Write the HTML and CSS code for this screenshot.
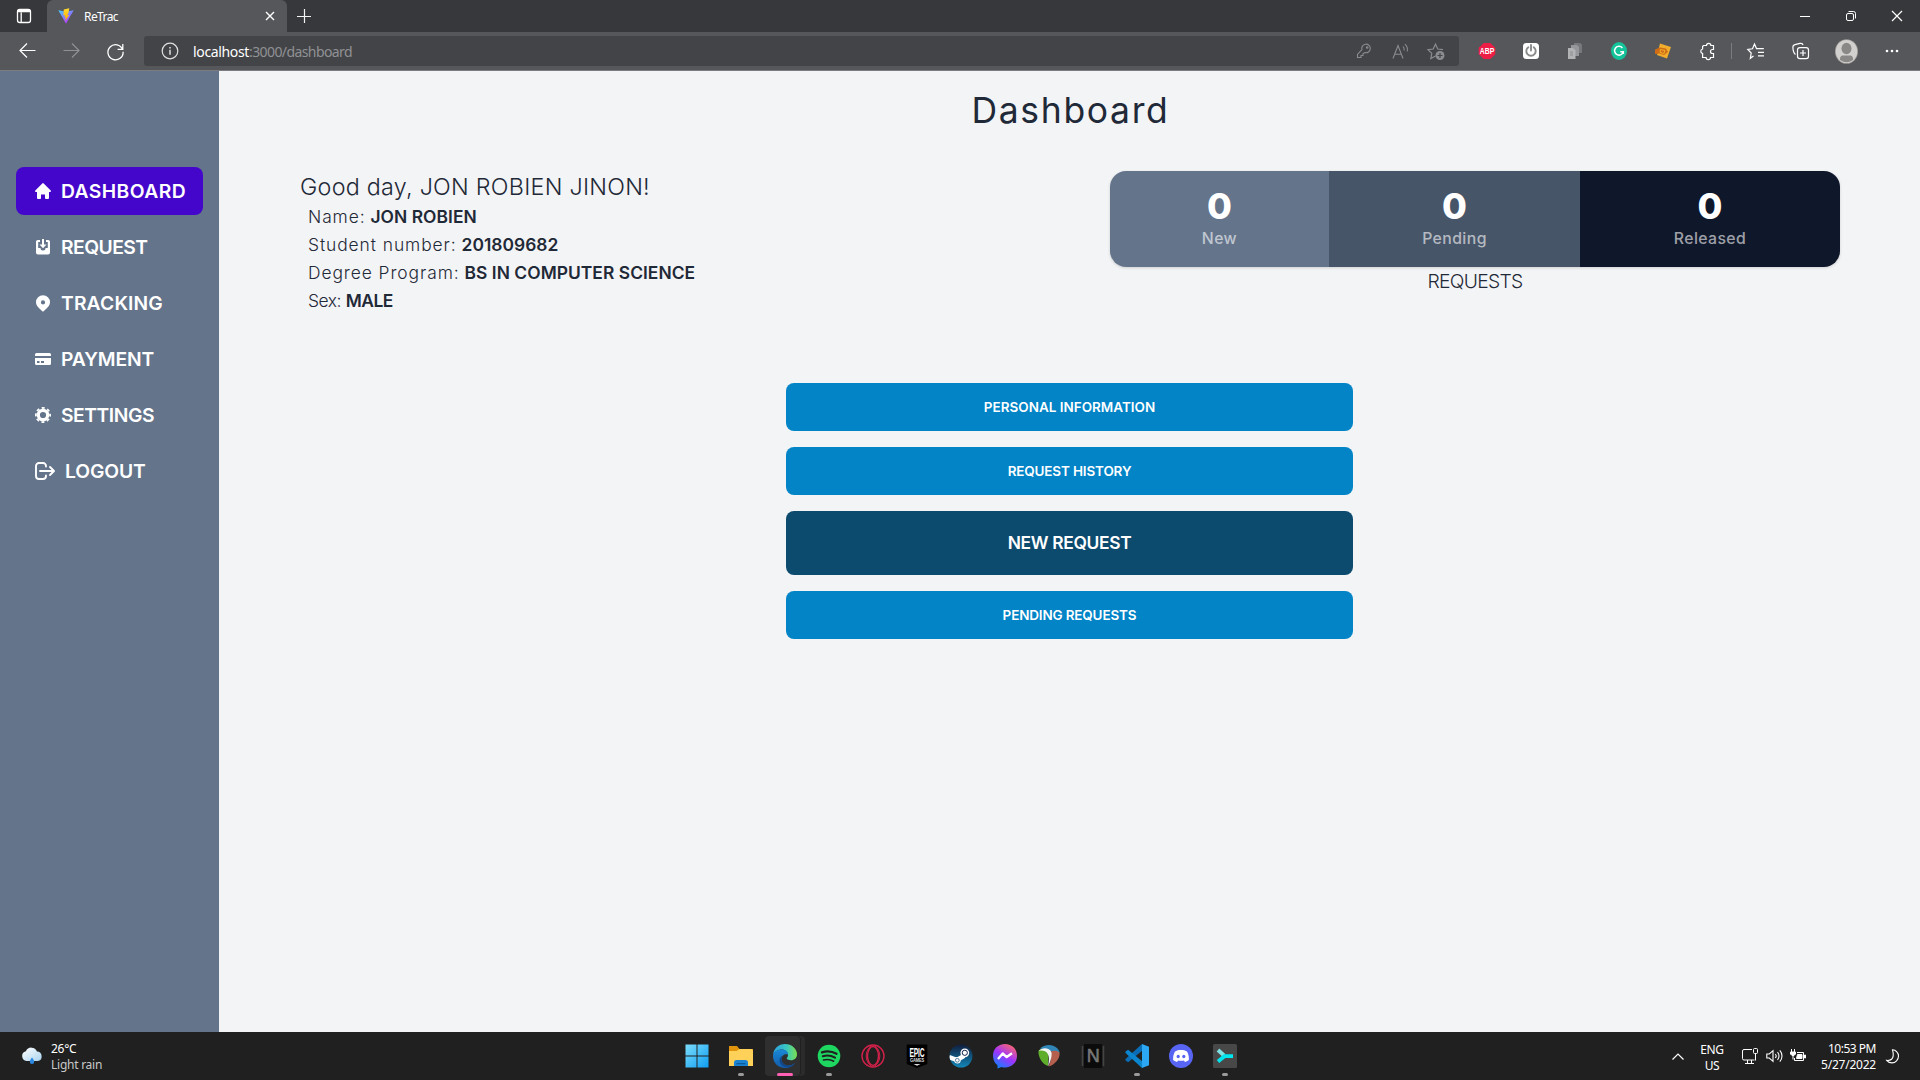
FILE: index.html
```html
<!DOCTYPE html>
<html lang="en">
<head>
<meta charset="utf-8">
<title>ReTrac</title>
<link rel="stylesheet" href="styles.css">
</head>
<body>
<div class="screen">
  <header class="titlebar">
    <div class="tab-actions">
      <svg width="16" height="16" viewBox="0 0 16 16" fill="none" stroke="#fff" stroke-width="1.3"><rect x="1.5" y="1.5" width="13" height="13" rx="2.2"/><path d="M1.500 3.500h13M2 2.500h12M5.200 4.500v10"/></svg>
    </div>
    <div class="tab">
      <svg width="16" height="16" viewBox="0 0 16 16"><defs><linearGradient id="va" x1="0" y1="0" x2=".6" y2="1"><stop offset="0" stop-color="#41d1ff"/><stop offset="1" stop-color="#bd34fe"/></linearGradient><linearGradient id="vb" x1="0" y1="0" x2="0" y2="1"><stop offset="0" stop-color="#ffdc30"/><stop offset="1" stop-color="#ffa800"/></linearGradient></defs><path d="M.3 2.300 8 15.700 15.700 2.300 8 3.700z" fill="url(#va)"/><path d="M11.300.3 5.800 1.400 5.400 7.600l1.700-.3-.5 2.400 1.300-.3L7.300 13l4-6.300-2 .4 1.300-2.700z" fill="url(#vb)"/></svg>
      <span class="tab-title">ReTrac</span>
      <svg class="tab-close" width="10" height="10" viewBox="0 0 10 10" stroke="#fff" stroke-width="1.400"><path d="M1 1l8 8M9 1l-8 8"/></svg>
    </div>
    <svg class="new-tab" width="14" height="14" viewBox="0 0 14 14" stroke="#f4f4f4" stroke-width="1.200"><path d="M7.500 0v14M0 7.500h14"/></svg>
    <div class="window-controls">
      <span><svg width="10" height="10" viewBox="0 0 10 10" stroke="#fff"><path d="M0 5.500h10"/></svg></span>
      <span><svg width="10" height="10" viewBox="0 0 10 10" fill="none" stroke="#fff"><rect x=".5" y="2.500" width="7" height="7" rx="1.500"/><path d="M2.500.5h5a2 2 0 0 1 2 2v5"/></svg></span>
      <span><svg width="10" height="10" viewBox="0 0 10 10" stroke="#fff" stroke-width="1.200"><path d="M0 0l10 10M10 0L0 10"/></svg></span>
    </div>
  </header>

  <div class="toolbar">
    <div class="nav-buttons">
      <span><svg width="17" height="16" viewBox="0 0 17 16" fill="none" stroke="#fff" stroke-width="1.200"><path d="M16.500 7.500H1M8 .5l-7 7 7 7"/></svg></span>
      <span><svg width="17" height="16" viewBox="0 0 17 16" fill="none" stroke="#909194" stroke-width="1.200"><path d="M.5 7.500H16M9 .5l7 7-7 7"/></svg></span>
      <span><svg width="17" height="17" viewBox="0 0 17 17" fill="none" stroke="#fff" stroke-width="1.300"><path d="M15.600 6.500A7.600 7.600 0 1 0 16.100 8.700M15.800 1v5.300h-5.200"/></svg></span>
    </div>
    <div class="address">
      <svg width="18" height="18" viewBox="0 0 18 18" fill="none" stroke="#e0e0e0" stroke-width="1.200"><circle cx="9" cy="9" r="7.800"/><path d="M9 7.800v5M9 5v1.500" stroke-width="1.500"/></svg>
      <div class="url"><span class="host">localhost</span><span class="path">:3000/dashboard</span></div>
      <div class="address-icons">
        <span><svg width="16" height="16" viewBox="0 0 16 16" fill="none" stroke="#8b8c8f" stroke-width="1.100"><path d="M8.900 9.600a4.300 4.300 0 1 0-3-2.900L1.500 11.500v3H5v-2h2v-1.700z"/><circle cx="11.200" cy="4.500" r=".8"/></svg></span>
        <span><svg width="17" height="17" viewBox="0 0 17 17" fill="none" stroke="#8b8c8f" stroke-width="1.100"><path d="M1 15.500 6 2.500l5 13M2.700 11.200h6.600M11 3.500a5 5 0 0 1 1.200 4M13 1.200a8 8 0 0 1 2.300 7.300"/></svg></span>
        <span><svg width="18" height="17" viewBox="0 0 18 17" fill="none" stroke="#8b8c8f" stroke-width="1.200"><path d="M8.500 13 3.800 15.600l1-5.200L1 6.700l5.200-.7L8.500 1.200 10.800 6l5.200.7"/><circle cx="13" cy="12.500" r="4.500" fill="#8b8c8f" stroke="none"/><path d="M13 10v5M10.500 12.500h5" stroke="#434447"/></svg></span>
      </div>
    </div>
    <div class="extensions">
      <span><svg width="18" height="18" viewBox="-1 0 18 18"><path d="M4.700 1h6.600L16.300 5.700v6.600L11.300 17H4.700L-.3 12.300V5.700z" fill="#ed1e45"/><text x="8" y="12.200" text-anchor="middle" font-family="Liberation Sans" font-weight="700" font-size="9" fill="#fff" textLength="14.500" lengthAdjust="spacingAndGlyphs">ABP</text></svg></span>
      <span><svg width="16" height="18" viewBox="0 0 16 18" fill="none"><rect y="1" width="16" height="16" rx="3.500" fill="#fff"/><path d="M5.300 5.200a4.700 4.700 0 1 0 5.400 0M8 3v5.500" stroke="#8a8b8d" stroke-width="1.900" stroke-linecap="round"/></svg></span>
      <span><svg width="16" height="16" viewBox="0 0 16 16"><path d="M7 0h6l2 1.500V10H7z" fill="#77787b"/><path d="M4 2h6l2 2v9H4z" fill="#96979a"/><path d="M1 5h5l2.500 2.500V16H1z" fill="#b2b3b5"/><path d="M3 8h3v5H3z" fill="#9fa0a2"/></svg></span>
      <span><svg width="16" height="18" viewBox="0 0 16 18"><ellipse cx="8" cy="9" rx="8" ry="9" fill="#15c39a"/><path d="M11.400 5.900A4.400 4.400 0 1 0 12.300 9.700H9.300M12.300 9.700v2.300" fill="none" stroke="#fff" stroke-width="1.500"/></svg></span>
      <span><svg width="16" height="16" viewBox="0 0 16 16"><path d="M5 .5l11 3.500-4 11.500L2 12z" fill="#f0ae2c"/><path d="M0 6.500l5-2 6 1 2 3.500-4 3-5-1.500-4 .5z" fill="#d06d14"/><path d="M5.500 6.500l4.500 1-1 3-4-1z" fill="none" stroke="#f0ae2c"/></svg></span>
      <span><svg width="17" height="18" viewBox="0 0 17 18" fill="none" stroke="#fff" stroke-width="1.200"><path d="M4.500 3.500h3a2.200 2.200 0 0 1 4.400 0h2.600v4h-1a2 2 0 0 0 0 4h1v4h-3a2.200 2.200 0 0 1-4.400 0H3.600v-4a2.300 2.300 0 0 1 0-4.500v-2.500z"/></svg></span>
      <i class="divider"></i>
      <span><svg width="18" height="18" viewBox="0 0 18 18" fill="none" stroke="#fff" stroke-width="1.200"><path d="M6.500 14 3.300 16.300 4.200 11 .8 7.500l4.700-.7L7.500 2l2 4.600h7.300M11 10.300h6M11 13.900h6"/></svg></span>
      <span><svg width="17" height="18" viewBox="0 0 17 18" fill="none" stroke="#fff" stroke-width="1.200"><path d="M3.500 12.500C1.500 11 1 8.500.9 5.500.8 4 1.500 3 3 2.600l5-1.200c1.500-.3 2.700.3 3 1.600"/><rect x="5.500" y="5.600" width="11" height="11" rx="2.400"/><path d="M11 8v6M8 11h6"/></svg></span>
      <span class="profile"><svg width="23" height="25" viewBox="0 0 23 25"><clipPath id="av"><circle cx="11.500" cy="12.500" r="10.700"/></clipPath><ellipse cx="11.500" cy="12.500" rx="11.500" ry="12.300" fill="#a29f9b"/><ellipse cx="11.500" cy="12.500" rx="10.700" ry="11.500" fill="#d2d0ce"/><ellipse cx="11.500" cy="9.500" rx="5" ry="5.700" fill="#8a8886"/><path clip-path="url(#av)" d="M5 25v-5.500c0-2.500 2-3 4-3h5c2 0 4 .5 4 3V25z" fill="#8a8886"/></svg></span>
      <span><svg width="14" height="4" viewBox="0 0 14 4" fill="#fff"><circle cx="2" cy="2" r="1.300"/><circle cx="7" cy="2" r="1.300"/><circle cx="12" cy="2" r="1.300"/></svg></span>
    </div>
  </div>

  <div class="app">
    <nav class="sidebar">
      <a class="nav-item active"><svg width="16" height="16" viewBox="0 0 16 16" fill="#fff"><path d="M7.300.4a1 1 0 0 1 1.400 0L15.700 7.400c.6.600.2 1.500-.6 1.500H14v6a1 1 0 0 1-1 1h-2.200a.8.8 0 0 1-.8-.8V11.500H6v3.700a.8.8 0 0 1-.8.8H3a1 1 0 0 1-1-1V8.900H.9C.1 8.900-.3 8 .3 7.400z"/></svg><span class="nav-dashboard">DASHBOARD</span></a>
      <a class="nav-item"><svg width="16" height="16" viewBox="0 0 16 16" fill="#fff"><path d="M1 2.500A1.700 1.700 0 0 1 2.700.9H5v2H3.200v6h2.300a2.500 2.500 0 0 0 5 0h2.300v-6H11v-2h2.300A1.700 1.700 0 0 1 15 2.500v11a1.900 1.900 0 0 1-1.900 1.900H2.900A1.900 1.900 0 0 1 1 13.500z"/><path d="M7 0h2v5.500h2.500L8 9.200 4.500 5.500H7z"/></svg><span class="nav-request">REQUEST</span></a>
      <a class="nav-item"><svg width="16" height="17" viewBox="0 0 16 17" fill="#fff"><path fill-rule="evenodd" d="M8 .3a7 7 0 0 1 7 7c0 3.700-3.800 6.700-7 9.500-3.200-2.800-7-5.800-7-9.500a7 7 0 0 1 7-7zm0 5a2.100 2.100 0 1 0 0 4.200 2.100 2.100 0 0 0 0-4.200z"/></svg><span class="nav-tracking">TRACKING</span></a>
      <a class="nav-item"><svg width="16" height="16" viewBox="0 0 16 16" fill="#fff"><path d="M0 5V3.500A1.500 1.500 0 0 1 1.500 2h13A1.500 1.500 0 0 1 16 3.500V5z"/><path fill-rule="evenodd" d="M0 7h16v5.500a1.500 1.500 0 0 1-1.500 1.500h-13A1.500 1.500 0 0 1 0 12.500zm2 3v2h2.500v-2zm4 0v2h3v-2z"/></svg><span class="nav-payment">PAYMENT</span></a>
      <a class="nav-item"><svg width="16" height="16" viewBox="0 0 16 16"><g fill="none" stroke="#fff"><circle cx="8" cy="8" r="4.700" stroke-width="3.200"/><circle cx="8" cy="8" r="7.100" stroke-width="1.800" stroke-dasharray="3 2.576" stroke-dashoffset="1.500"/></g></svg><span class="nav-settings">SETTINGS</span></a>
      <a class="nav-item"><svg width="20" height="18" viewBox="0 0 20 18" fill="none" stroke="#fff" stroke-width="1.900" stroke-linecap="round" stroke-linejoin="round"><path d="M11 4.500V4a3 3 0 0 0-3-3H4a3 3 0 0 0-3 3v10a3 3 0 0 0 3 3h4a3 3 0 0 0 3-3v-.5M5 9h13.500M15 5l4 4-4 4"/></svg><span class="nav-logout">LOGOUT</span></a>
    </nav>

    <main class="content">
      <h1 class="title">Dashboard</h1>
      <section class="overview">
        <div class="student">
          <p class="greeting">Good day, JON ROBIEN JINON!</p>
          <ul class="details">
            <li><span class="wide">Name:</span> <b>JON ROBIEN</b></li>
            <li><span class="wide">Student number:</span> <b>201809682</b></li>
            <li><span class="wide">Degree Program:</span> <b>BS IN COMPUTER SCIENCE</b></li>
            <li><span class="sex">Sex:</span> <b class="sex">MALE</b></li>
          </ul>
        </div>
        <div class="requests">
          <div class="stats">
            <div class="stat stat-new"><b>0</b><span>New</span></div>
            <div class="stat stat-pending"><b>0</b><span>Pending</span></div>
            <div class="stat stat-released"><b>0</b><span>Released</span></div>
          </div>
          <p class="caption">REQUESTS</p>
        </div>
      </section>
      <section class="actions">
        <a class="button personal">PERSONAL INFORMATION</a>
        <a class="button">REQUEST HISTORY</a>
        <a class="button primary">NEW REQUEST</a>
        <a class="button">PENDING REQUESTS</a>
      </section>
    </main>
  </div>

  <footer class="taskbar">
    <div class="weather">
      <svg width="22" height="18" viewBox="0 0 22 18"><defs><linearGradient id="cl" x1="0" y1="0" x2="1" y2="1"><stop offset="0" stop-color="#fff"/><stop offset="1" stop-color="#a9d2ee"/></linearGradient></defs><path d="M5.500 14a5 5 0 0 1-.6-9.800A6 6 0 0 1 16 4.500a4.800 4.800 0 0 1 .8 9.500z" fill="url(#cl)"/><path d="M11 10.500c1.500 2 2.200 3 2.200 4.200a2.200 2.200 0 0 1-4.400 0c0-1.200.7-2.200 2.200-4.200z" fill="#2b88e0"/></svg>
      <div class="forecast"><p>26°C</p><p class="cond">Light rain</p></div>
    </div>
    <div class="apps">
      <span><svg width="24" height="24" viewBox="0 0 24 24"><defs><linearGradient id="wn" x1="0" y1="0" x2="1" y2="1"><stop offset="0" stop-color="#7bddfb"/><stop offset="1" stop-color="#0f9df2"/></linearGradient></defs><path d="M.5.500h11v11H.5zM12.500.5h11v11h-11zM.5 12.500h11v11H.5zM12.500 12.500h11v11h-11z" fill="url(#wn)"/></svg></span>
      <span class="running"><svg width="24" height="24" viewBox="0 0 24 24"><path d="M0 2h8l2.500 3H24v4H0z" fill="#e0930c"/><path d="M0 7h7.500l3-2H22a2 2 0 0 1 2 2v15H0z" fill="#ffd158"/><path d="M5 22v-3.500A2.500 2.500 0 0 1 7.500 16h9a2.500 2.500 0 0 1 2.500 2.500V22z" fill="#1b83d2"/><path d="M7.500 19h9v1.300h-9z" fill="#0c5a9c"/></svg></span>
      <span class="running current"><svg width="24" height="24" viewBox="0 0 24 24"><defs><linearGradient id="e1" x1="0" y1=".3" x2="1" y2=".3"><stop offset="0" stop-color="#2c9fe0"/><stop offset=".55" stop-color="#38c7c4"/><stop offset="1" stop-color="#79e04f"/></linearGradient><linearGradient id="e2" x1="0" y1="0" x2="0" y2="1"><stop offset="0" stop-color="#1989d8"/><stop offset="1" stop-color="#135ba8"/></linearGradient></defs><path d="M0 11C.6 4.500 5.500 0 12 0c7 0 12 5 12 10.200 0 3.800-2.600 6-6 6-2.800 0-4.300-1-4.300-1.700 0-.8 1.300-1.200 1.300-3.500C15 8 12.500 5.500 8.800 5.500 5 5.500 1.500 7.500 0 11z" fill="url(#e1)"/><path d="M0 11.500C.5 8 4.500 5.500 8.500 5.500c4 0 6.500 2.300 6.500 5 0 0-3.500-1.200-5.500 1.500-2.800 4 .5 9.500 5.500 9.500 2.500 0 5-.8 7-2.500C20 22 16.500 24 12 24 5 24-.3 18.500 0 11.500z" fill="url(#e2)"/><path d="M9.500 12c-2.800 4 .5 9.500 5.500 9.500 2.500 0 5-.8 7-2.500-.8 1.200-2 2.400-3.300 3.200C11 26 4.800 19 7 14.500 7.500 13.200 8.500 12.300 9.500 12z" fill="#12468a"/></svg></span>
      <span class="running"><svg width="24" height="24" viewBox="0 0 24 24" fill="none" stroke="#202020" stroke-linecap="round"><circle cx="12" cy="12" r="11.300" fill="#1ed760" stroke="none"/><path d="M5 8.300c5-1.500 10.500-.8 14.500 1.500" stroke-width="2.300"/><path d="M5.800 12.300c4.300-1.300 8.800-.6 12.200 1.400" stroke-width="2"/><path d="M6.500 16c3.600-1 7.200-.6 10.200 1.200" stroke-width="1.600"/></svg></span>
      <span><svg width="24" height="24" viewBox="0 0 24 24" fill="none" stroke="#d3214a" stroke-width="1.400"><circle cx="12" cy="12" r="11"/><ellipse cx="12" cy="12" rx="5.500" ry="9.500"/><path d="M10.500 1.500a13 13 0 0 0 0 21M13.500 1.500a13 13 0 0 1 0 21" stroke-width="1"/></svg></span>
      <span><svg width="24" height="24" viewBox="-1 0 24 24"><path d="M.7.500h20.600V20L11 24 .7 20z" fill="#000"/><text x="11" y="12.500" text-anchor="middle" font-family="Liberation Sans" font-weight="700" font-size="12.500" fill="#fff" textLength="15" lengthAdjust="spacingAndGlyphs">EPIC</text><text x="11" y="17.600" text-anchor="middle" font-family="Liberation Sans" font-weight="700" font-size="4.500" fill="#ddd" textLength="14" lengthAdjust="spacingAndGlyphs">GAMES</text><path d="M7.500 20h7L11 21.700z" fill="#ddd"/></svg></span>
      <span><svg width="24" height="24" viewBox="0 0 24 24"><defs><linearGradient id="st" x1="0" y1="0" x2="0" y2="1"><stop offset="0" stop-color="#111d3c"/><stop offset="1" stop-color="#1387b8"/></linearGradient><clipPath id="sc"><circle cx="12" cy="12" r="11.500"/></clipPath></defs><circle cx="12" cy="12" r="11.500" fill="url(#st)"/><path clip-path="url(#sc)" d="M0 13l8 3 6-3.500L15 9" fill="none" stroke="#fff" stroke-width="4.500"/><circle cx="15.800" cy="8.800" r="4.400" fill="#fff"/><circle cx="15.800" cy="8.800" r="2.600" fill="#fff" stroke="#15264b"/><circle cx="8.500" cy="16.300" r="3.200" fill="#fff"/><circle cx="8.300" cy="16.300" r="1.900" fill="none" stroke="#144a76" stroke-width=".7"/></svg></span>
      <span><svg width="24" height="24" viewBox="0 0 24 24"><defs><linearGradient id="ms" x1=".2" y1="1" x2=".8" y2="0"><stop offset="0" stop-color="#0a85ff"/><stop offset=".5" stop-color="#a033ff"/><stop offset="1" stop-color="#ff6a68"/></linearGradient></defs><path d="M12 0c7 0 12 5 12 11.700s-5 11.700-12 11.700c-1.300 0-2.400-.1-3.500-.5L4.500 24.500v-3.300C1.700 19 0 15.700 0 11.700 0 5 5 0 12 0z" fill="url(#ms)"/><path d="M5 15l4.700-5.500 4 3.600L19 9.300" fill="none" stroke="#fff" stroke-width="2.400" stroke-linejoin="round"/></svg></span>
      <span><svg width="24" height="24" viewBox="0 0 24 24"><path d="M3 4.500C7 .5 15-.5 20 4c1.500 1.500 2.500 3 2.500 5L13 7z" fill="#2f86b7"/><path d="M1.500 7C3 4 9 4.500 11.500 7.500L11 22C5 20 1 13 1.500 7z" fill="#5fae2b"/><path d="M13.500 7.500c3-1.500 7-1 9 1C23.500 14 18 21 11.500 22.500c2.500-5 3.500-10 2-15z" fill="#b5604f"/><path d="M1.800 7C5 3 12.500 3.500 14.300 8c1.200 4-1 10-3.300 14.500 1-5 1.500-10-.5-13S5 6 1.800 7z" fill="#f4f4f4"/></svg></span>
      <span><svg width="24" height="24" viewBox="0 0 24 24"><path d="M3 0h18v24H3z" fill="#0b0b0b"/><path d="M1.500 2v20M22.500 2v20" stroke="#444" stroke-width="1.500"/><text x="12" y="18" text-anchor="middle" font-family="Liberation Sans" font-size="18" fill="#777" stroke="#777" stroke-width=".6">N</text></svg></span>
      <span class="running"><svg width="24" height="24" viewBox="0 0 24 24"><path d="M17 0 18 6 3.200 18.200.5 16.500V15z" fill="#0a6db5"/><path d="M17 24l1-6L3.200 5.800.5 7.500V9z" fill="#0c85cf"/><path d="M17 0l7 2.800v18.400L17 24z" fill="#2ba7f3"/></svg></span>
      <span><svg width="24" height="24" viewBox="0 0 24 24"><circle cx="12" cy="12" r="12" fill="#5865f2"/><path d="M8.700 6.300c2-.4 4.600-.4 6.600 0L18 7.500c1.500 2.500 2 5 1.900 8.500-1.300 1-2.600 1.600-4 1.900l-.9-1.500c-2 .4-4 .4-6 0l-.9 1.500c-1.400-.3-2.700-.9-4-1.900C4 12.500 4.500 10 6 7.500z" fill="#fff"/><ellipse cx="9.200" cy="12.500" rx="1.600" ry="1.800" fill="#5865f2"/><ellipse cx="14.800" cy="12.500" rx="1.600" ry="1.800" fill="#5865f2"/></svg></span>
      <span class="running"><svg width="24" height="24" viewBox="0 0 24 24"><rect width="24" height="24" rx="1.500" fill="#484848"/><path d="M5 6l6 5.500" fill="none" stroke="#7fe0e2" stroke-width="3.800"/><path d="M5 17.500l6.500-5.300H20" fill="none" stroke="#00e5ee" stroke-width="3.800"/></svg></span>
    </div>
    <div class="tray">
      <span class="chevron"><svg width="12" height="7" viewBox="0 0 12 7" fill="none" stroke="#fff" stroke-width="1.200"><path d="M.5 6.500 6 1l5.500 5.500"/></svg></span>
      <div class="lang"><p>ENG</p><p>US</p></div>
      <div class="status">
        <span><svg width="16" height="16" viewBox="0 0 16 16" fill="none" stroke="#fff"><path d="M10 1.500H2a1.500 1.500 0 0 0-1.500 1.500v7.500A1.500 1.500 0 0 0 2 12h10.500M3 15.500h9M5.500 12v3M9.500 12v3M13.500 6v6.500"/><rect x="11.500" y=".5" width="4" height="5" rx="1"/></svg></span>
        <span><svg width="17" height="14" viewBox="0 0 17 14" fill="none" stroke="#fff" stroke-width="1.100"><path d="M.8 5v4h2.500L7 12.300V1.700L3.300 5zM9.300 5a3 3 0 0 1 0 4M11.500 3.200a5.500 5.500 0 0 1 0 7.600M13.800 1.300a8.500 8.500 0 0 1 0 11.400"/></svg></span>
        <span><svg width="16" height="14" viewBox="0 0 16 14" fill="none" stroke="#fff"><path d="M7 3.500h6.500v8h-9V9M14.500 6v3h1V6z"/><path d="M7.500 5.500h4.500v4H6.500z" fill="#fff"/><path d="M1.500 0v3M4.500 0v3M3 6v4.500"/><path d="M.5 3h5v2L4 6.500H2L.5 5z" fill="#fff"/></svg></span>
      </div>
      <div class="clock"><p class="time">10:53 PM</p><p class="date">5/27/2022</p></div>
      <svg class="moon" width="14" height="15" viewBox="0 0 14 15" fill="none" stroke="#fff" stroke-width="1.100"><path d="M6.500.8c3.500.2 6 3 6 6.200 0 3.700-3 6.700-6.500 6.900-2.300 0-4.200-1-5.300-2.500 3 .3 6-1 6.500-4.500.3-2.200-.2-4.500-.7-6.100z"/></svg>
    </div>
  </footer>
</div>
</body>
</html>
```
FILE: styles.css
```css
* { box-sizing: border-box; margin: 0; padding: 0; }
body { width: 1920px; height: 1080px; overflow: hidden; font-family: Inter, "Open Sans", sans-serif; color: #1f2937; white-space: nowrap; }
svg { display: block; flex: none; overflow: visible; }
.screen { display: flex; flex-direction: column; width: 1920px; height: 1080px; }

/* Browser window */
.titlebar { display: flex; align-items: center; height: 32px; background: #37383b; font-family: "Noto Sans", sans-serif; }
.tab-actions { display: flex; justify-content: center; width: 47px; }
.tab { display: flex; align-items: center; width: 240px; height: 32px; padding: 0 12px 0 11px; background: #56575b; border-radius: 6px 6px 0 0; }
.tab-title { margin-left: 10px; font-size: 12px; letter-spacing: -.58px; color: #fff; }
.tab-close { margin-left: auto; }
.new-tab { margin-left: 10px; }
.window-controls { display: flex; margin-left: auto; }
.window-controls span { display: flex; align-items: center; justify-content: center; width: 46px; height: 32px; }
.toolbar { display: flex; align-items: center; height: 39px; padding-right: 6px; background: #56575b; border-bottom: 1px solid #7b7b80; }
.nav-buttons { display: flex; width: 144px; padding-left: 5px; }
.nav-buttons span { display: flex; justify-content: center; align-items: center; width: 44px; }
.address { display: flex; align-items: center; width: 1315px; height: 30px; padding: 0 5px 0 17px; border-radius: 3px; background: #434447; }
.url { margin-left: 14px; font: 14px "Noto Sans", sans-serif; color: #909194; }
.host { color: #fff; letter-spacing: -.35px; }
.path { letter-spacing: -.59px; }
.address-icons { display: flex; margin-left: auto; }
.address-icons span { display: flex; justify-content: center; align-items: center; width: 36px; }
.extensions { display: flex; align-items: center; margin-left: auto; }
.extensions span { display: flex; justify-content: center; align-items: center; width: 44px; }
.extensions .profile { width: 48px; }
.divider { width: 1px; height: 16px; margin: 0 2px; background: #7b7c80; }

/* Application */
.app { display: flex; height: 961px; background: #f3f4f6; }
.sidebar { display: flex; flex-direction: column; gap: 8px; width: 219px; padding: 96px 16px 0; background: #64748b; }
.nav-item { display: flex; align-items: center; gap: 10px; height: 48px; padding-left: 19px; border-radius: 8px; color: #fff; font-size: 19.3px; font-weight: 600; }
.nav-item.active { background: #4506cb; }
.nav-dashboard { letter-spacing: .42px; }
.nav-request { letter-spacing: -.54px; }
.nav-tracking { letter-spacing: .15px; }
.nav-payment, .nav-logout { letter-spacing: -.14px; }
.nav-settings { letter-spacing: -.45px; }
.content { flex: 1; }
.title { height: 80px; padding-left: 2px; text-align: center; font-size: 35.500px; line-height: 80px; font-weight: 400; letter-spacing: 1.65px; }
.overview { display: flex; justify-content: space-between; padding: 20px 80px 0 81px; height: 232px; }
.greeting { font-size: 23.3px; font-weight: 300; line-height: 32px; letter-spacing: .26px; }
.details { padding-left: 8px; list-style: none; font-size: 17.4px; font-weight: 300; line-height: 28px; }
.details b { font-weight: 600; letter-spacing: .05px; }
.details .wide { letter-spacing: .93px; }
.details .sex { letter-spacing: -.5px; }
.requests { width: 730px; }
.stats { display: grid; grid-template-columns: 219px 251px 260px; height: 96px; overflow: hidden; border-radius: 16px; color: #fff; box-shadow: 0 1px 3px rgba(0, 0, 0, .15); }
.stat { display: flex; flex-direction: column; align-items: center; padding-top: 15px; }
.stat b { font-size: 36px; line-height: 40px; font-weight: 800; }
.stat span { font-size: 15.800px; line-height: 26px; letter-spacing: .4px; font-weight: 500; color: rgba(255, 255, 255, .6); }
.stat-new { background: #64748b; }
.stat-pending { background: #475569; }
.stat-released { background: #0f172a; }
.caption { text-align: center; font-size: 19.3px; line-height: 28px; font-weight: 300; letter-spacing: -.7px; }
.actions { display: flex; flex-direction: column; gap: 16px; width: 567px; margin: 0 auto; }
.button { display: flex; align-items: center; justify-content: center; height: 48px; border-radius: 8px; background: #0284c7; color: #fff; font-size: 13.5px; font-weight: 600; letter-spacing: -.16px; }
.button.personal { letter-spacing: 0; }
.button.primary { height: 64px; padding-bottom: 1px; background: #0c4a6e; font-size: 17.4px; letter-spacing: -.34px; }

/* Taskbar */
.taskbar { display: flex; height: 48px; background: #202020; color: #fff; font: 12px/16px "Noto Sans", sans-serif; letter-spacing: -.25px; }
.weather { display: flex; align-items: center; gap: 8px; width: 675px; padding-left: 21px; }
.forecast { padding-top: 2px; }
.cond { color: #c8c8c8; }
.apps { display: flex; align-items: center; }
.apps span { position: relative; display: flex; align-items: center; justify-content: center; width: 44px; height: 40px; }
.running::after { content: ""; position: absolute; left: 19px; bottom: 0; width: 6px; height: 3px; border-radius: 2px; background: #9a9a9a; }
.current::before { content: ""; position: absolute; left: 2px; top: 0; width: 35px; height: 40px; border-radius: 4px; background: #2f2f2f; box-shadow: 1px 0 #202020, 5px 0 #2b2b2b; }
.current svg { position: relative; }
.current::after { left: 14px; width: 16px; background: #ff5fb4; }
.tray { display: flex; align-items: center; margin-left: auto; padding-right: 20px; }
.chevron { display: flex; justify-content: center; width: 32px; }
.lang { width: 36px; padding-top: 3px; text-align: center; letter-spacing: -.4px; }
.status { display: flex; margin-left: 8px; }
.status span { display: flex; justify-content: center; align-items: center; width: 24px; }
.clock { width: 66px; padding-top: 1px; text-align: right; }
.time { letter-spacing: -.49px; }
.date { letter-spacing: -.22px; }
.moon { margin-left: 10px; }
```
